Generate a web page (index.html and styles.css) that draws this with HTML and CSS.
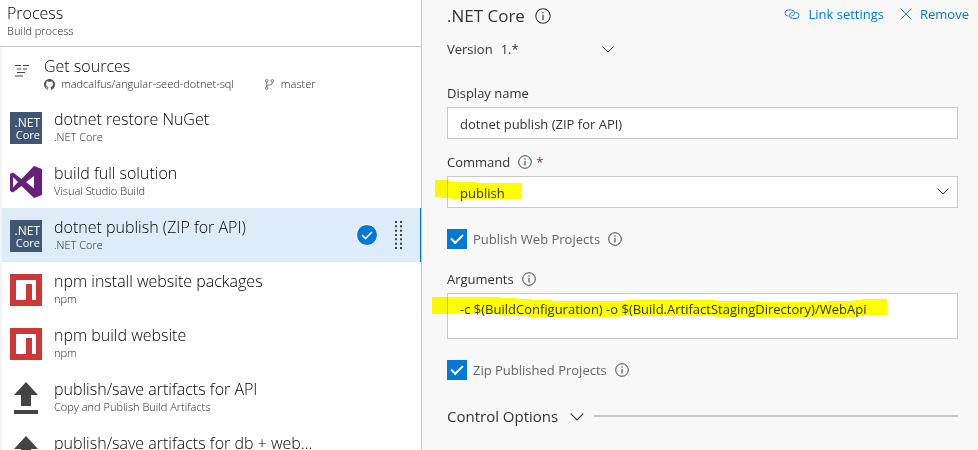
FILE: index.html
```html
<!DOCTYPE html>
<html lang="en">
<head>
<meta charset="utf-8">
<title>Build process</title>
<link rel="stylesheet" href="styles.css">
</head>
<body>
<svg class="defs" aria-hidden="true">
  <symbol id="info" viewBox="0 0 14 14"><circle cx="7" cy="7" r="6.3" fill="none" stroke="currentColor" stroke-width=".9"/><path d="M7 6v4.500M7 3.400v1.300" stroke="currentColor"/></symbol>
  <symbol id="chevron" viewBox="0 0 12 7"><path d="M.5.5L6 6 11.500.5" fill="none" stroke="currentColor"/></symbol>
  <symbol id="npm" viewBox="0 0 32 32"><path fill="#cb3837" d="M0 0h32v32H0z"/><path fill="#fff" d="M6 6h20v20h-4V10h-6v16H6z"/></symbol>
  <symbol id="upload" viewBox="0 0 32 32"><path fill="#444" d="M16 0l12 13h-7v11H11V13H4zM4 28h24v4H4z"/></symbol>
</svg>
<div class="app">
  <nav class="process" aria-label="Process">
    <header class="process-head">
      <h1 class="title">Process</h1>
      <p class="sub">Build process</p>
    </header>
    <ul class="steps">
      <li class="step sources">
        <svg class="source-icon" viewBox="0 0 16 14"><path d="M1 1.500h6M9 1.500h6M3 5h4M9 5h4M3 8.500h8M1 12h8" stroke="#444" stroke-width="1.2"/></svg>
        <div class="step-text">
          <h2 class="title">Get sources</h2>
          <p class="sub repo">
            <svg class="meta-icon" viewBox="0 0 16 16"><path fill="#555" d="M8 0C3.580 0 0 3.580 0 8c0 3.540 2.290 6.530 5.470 7.590.4.070.55-.17.55-.38v-1.490c-2.010.37-2.530-.49-2.690-.94-.09-.23-.48-.94-.82-1.130-.28-.15-.68-.52-.01-.53.63-.01 1.080.58 1.230.82.72 1.210 1.870.87 2.330.66.07-.52.28-.87.51-1.070-1.780-.2-3.640-.89-3.640-3.950 0-.87.31-1.590.82-2.150-.08-.2-.36-1.020.08-2.120 0 0 .67-.21 2.200.82a7.600 7.600 0 014 0c1.530-1.040 2.200-.82 2.200-.82.44 1.100.16 1.920.08 2.120.51.56.82 1.270.82 2.150 0 3.070-1.870 3.750-3.650 3.950.29.25.54.73.54 1.480v2.200c0 .21.15.46.55.38A8 8 0 0016 8c0-4.420-3.580-8-8-8z"/></svg>
            <span>madcalfus/angular-seed-dotnet-sql</span>
            <svg class="meta-icon branch" viewBox="0 0 12 12"><g fill="none" stroke="#666"><circle cx="3" cy="2" r="1.400"/><circle cx="9" cy="2" r="1.400"/><circle cx="3" cy="10" r="1.400"/><path d="M3 3.500v5M9 3.500c0 3-1.500 3-3 3S3 6.500 3 8.500"/></g></svg>
            <span>master</span>
          </p>
        </div>
      </li>
      <li class="step">
        <div class="logo netcore"><span>.NET</span><span class="core">Core</span></div>
        <div class="step-text"><h2 class="title">dotnet restore NuGet</h2><p class="sub">.NET Core</p></div>
      </li>
      <li class="step">
        <svg class="logo" viewBox="0 0 32 32"><path fill="#68217a" fill-rule="evenodd" d="M24 0l8 3v26l-8 3-12.500-12L3 26.500 0 25V8l3-1.500 8.500 6.500zM24 10l-8 6 8 6.500zM3 11v10.500L8 16z"/></svg>
        <div class="step-text"><h2 class="title">build full solution</h2><p class="sub">Visual Studio Build</p></div>
      </li>
      <li class="step selected">
        <div class="logo netcore"><span>.NET</span><span class="core">Core</span></div>
        <div class="step-text"><h2 class="title">dotnet publish (ZIP for API)</h2><p class="sub">.NET Core</p></div>
        <svg class="status" viewBox="0 0 22 22"><circle cx="11" cy="11" r="10.500" fill="#0078d7" stroke="#fff"/><path d="M6 11l3.500 3.500L16 8" fill="none" stroke="#fff" stroke-width="1.600"/></svg>
        <svg class="grip" viewBox="0 0 8 28"><path d="M2 0v28M7 0v28" stroke="#444" stroke-width="2" stroke-dasharray="2 2.330"/></svg>
      </li>
      <li class="step">
        <svg class="logo"><use href="#npm"/></svg>
        <div class="step-text"><h2 class="title">npm install website packages</h2><p class="sub">npm</p></div>
      </li>
      <li class="step">
        <svg class="logo"><use href="#npm"/></svg>
        <div class="step-text"><h2 class="title">npm build website</h2><p class="sub">npm</p></div>
      </li>
      <li class="step">
        <svg class="logo"><use href="#upload"/></svg>
        <div class="step-text"><h2 class="title">publish/save artifacts for API</h2><p class="sub">Copy and Publish Build Artifacts</p></div>
      </li>
      <li class="step">
        <svg class="logo"><use href="#upload"/></svg>
        <div class="step-text"><h2 class="title">publish/save artifacts for db + web...</h2></div>
      </li>
    </ul>
  </nav>

  <main class="details">
    <header class="details-head">
      <h2 class="heading">.NET Core</h2>
      <svg class="info large"><use href="#info"/></svg>
      <div class="actions">
        <button class="action" type="button"><svg class="link-icon" viewBox="0 0 16 11"><g fill="none" stroke="currentColor" stroke-width=".9"><path d="M4.500 7H4A3 3 0 014 1h3.500a3 3 0 010 6H7"/><path d="M11.500 3.500h.5a3 3 0 010 6H8.500a3 3 0 010-6H9"/></g></svg>Link settings</button>
        <button class="action" type="button"><svg class="close-icon" viewBox="0 0 12 12"><path d="M.5.5l11 11M11.500.5l-11 11" stroke="currentColor" stroke-width=".9"/></svg>Remove</button>
      </div>
    </header>

    <div class="version">
      <label for="version">Version</label>
      <span class="version-box">
        <select id="version" class="version-select"><option>1.*</option></select>
        <svg class="chevron"><use href="#chevron"/></svg>
      </span>
    </div>

    <div class="field">
      <label class="label" for="name">Display name</label>
      <input id="name" class="control" type="text" value="dotnet publish (ZIP for API)">
    </div>

    <div class="field">
      <div class="label-row"><label class="label" for="command">Command</label><svg class="info"><use href="#info"/></svg><span class="required">*</span></div>
      <div class="control-box">
        <select id="command" class="control"><option>publish</option></select>
        <svg class="chevron inside"><use href="#chevron"/></svg>
        <svg class="marker marker-command" viewBox="0 0 87 19"><path fill="#ff0" d="M0 0h14v2h28v1h45v16H15v-1H6v-1H0z"/></svg>
      </div>
    </div>

    <div class="check">
      <input id="web" class="tick" type="checkbox" checked><label for="web">Publish Web Projects</label><svg class="info"><use href="#info"/></svg>
    </div>

    <div class="field">
      <div class="label-row"><label class="label" for="args">Arguments</label><svg class="info"><use href="#info"/></svg></div>
      <div class="control-box">
        <textarea id="args" class="control area">-c $(BuildConfiguration) -o $(Build.ArtifactStagingDirectory)/WebApi</textarea>
        <svg class="marker marker-args" viewBox="0 0 455 20"><path fill="#ff0" d="M0 0h69v1h17v1h14v1h20v1h73v-1h93v1h38v1h71v-1h27v-1h8v-1h25v16h-21v1h-8v1H283v-1h-95v1H97v-1H83v-1H68v-1H0z"/></svg>
      </div>
    </div>

    <div class="check">
      <input id="zip" class="tick" type="checkbox" checked><label for="zip">Zip Published Projects</label><svg class="info"><use href="#info"/></svg>
    </div>

    <button class="section" type="button">Control Options<svg class="chevron wide"><use href="#chevron"/></svg><span class="rule"></span></button>
  </main>
</div>
</body>
</html>
```
FILE: styles.css
```css
* { box-sizing: border-box; }

body {
  margin: 0;
  height: 100vh;
  overflow: hidden;
  font: 13px/20px "Open Sans", "Noto Sans", sans-serif;
  color: #333;
  background: #f8f8f8;
}

h1, h2, p, ul { margin: 0; padding: 0; font-weight: 400; }
ul { list-style: none; }
svg { flex: none; display: block; }
button, input, select, textarea { font: inherit; color: inherit; }
button { border: 0; padding: 0; background: none; }

.defs { position: absolute; width: 0; height: 0; }

.app {
  display: grid;
  grid-template-columns: 43.15% 1fr;
  height: 100vh;
}

.process {
  background: #fff;
  border-right: 1px solid #c8c8c8;
  overflow: hidden;
}

.process-head {
  height: 47px;
  padding: 3px 7px;
  border-bottom: 1px solid #c8c8c8;
}

.title { font-size: 16px; font-weight: 300; line-height: 20px; color: #000; white-space: nowrap; }
.sub { margin-top: 1px; font-size: 11px; font-weight: 300; line-height: 14px; color: #222; white-space: nowrap; }

.steps { border-left: 2px solid #f4f4f4; }

.step {
  display: flex;
  align-items: flex-start;
  height: 54px;
  padding: 9px 16px 0 8px;
}

.logo { flex: none; width: 32px; height: 32px; margin-top: 3px; }
.step-text { flex: 1; margin-left: 12px; min-width: 0; }

.netcore {
  padding: 5px 2px 0 0;
  background: #405673;
  color: #fff;
  font-size: 12px;
  line-height: 12px;
  text-align: right;
}
.netcore span { display: block; }
.netcore .core { font-size: 11px; }

.sources { height: 53px; }
.source-icon { width: 16px; height: 14px; margin: 8px 0 0 4px; }
.sources .step-text { margin-left: 14px; }
.repo { display: flex; align-items: center; }
.meta-icon { width: 11px; height: 11px; margin-right: 6px; }
.branch { margin-left: 30px; }

.selected {
  background: #deecf9;
  border-right: 1px solid #0078d7;
}
.status { width: 22px; height: 22px; margin: 7px 16px 0 0; }
.grip { width: 8px; height: 28px; margin: 4px 2px 0 0; }

.details { padding: 4px 20px 0 25px; }

.details-head { display: flex; align-items: center; height: 24px; }
.heading { font-size: 17px; line-height: 24px; }

.info { width: 14px; height: 14px; margin-left: 8px; }
.info.large { width: 16px; height: 16px; margin-left: 10px; }

.actions { display: flex; gap: 16px; margin: -4px -11px 0 auto; }
.action { display: flex; align-items: center; gap: 8px; color: #0078d7; }
.link-icon { width: 16px; height: 11px; }
.close-icon { width: 12px; height: 12px; }

.version { display: flex; align-items: center; gap: 8px; margin-top: 11px; }
.version-box { display: flex; align-items: center; width: 113px; }
.version-select {
  flex: 1;
  min-width: 0;
  appearance: none;
  border: 0;
  padding: 0;
  background: none;
}

.chevron { width: 12px; height: 7px; }
.chevron.inside { position: absolute; right: 9px; top: 12px; }
.chevron.wide { width: 14px; height: 8px; margin: 2px 10px 0 12px; }

.field { margin-top: 13px; }
.version + .field { margin-top: 24px; }
.label { display: block; }
.label-row { display: flex; align-items: center; }
.required { margin-left: 4px; color: #a4262c; }

.control {
  display: block;
  width: 100%;
  height: 32px;
  margin-top: 4px;
  padding: 2px 12px 0;
  border: 1px solid #c8c8c8;
  border-radius: 0;
  background: #fff;
  appearance: none;
}
.control-box { position: relative; margin-top: 4px; }
.control-box .control { margin-top: 0; }
.area { height: 46px; padding-top: 5px; resize: none; overflow: hidden; }

.marker {
  position: absolute;
  mix-blend-mode: multiply;
  pointer-events: none;
}
.marker-command { left: -12px; top: 4px; width: 87px; height: 19px; }
.marker-args { left: -15px; top: 4px; width: 455px; height: 20px; }

.check { display: flex; align-items: center; margin-top: 20px; color: #666; }
.check .info, .label-row .info { color: #333; }
.field + .check { padding-top: 1px; }
.check + .field { margin-top: 20px; }

.tick {
  appearance: none;
  width: 20px;
  height: 20px;
  margin: 0 6px 0 0;
  background: #0078d7;
  display: grid;
  place-items: center;
}
.tick:checked::before {
  content: "";
  width: 10px;
  height: 5px;
  margin-bottom: 4px;
  border: solid #fff;
  border-width: 0 0 2px 2px;
  transform: rotate(-45deg);
}

.section {
  display: flex;
  align-items: center;
  width: 100%;
  margin-top: 24px;
  font-size: 15px;
  line-height: 24px;
}
.rule { flex: 1; height: 2px; background: #c8c8c8; }
```
